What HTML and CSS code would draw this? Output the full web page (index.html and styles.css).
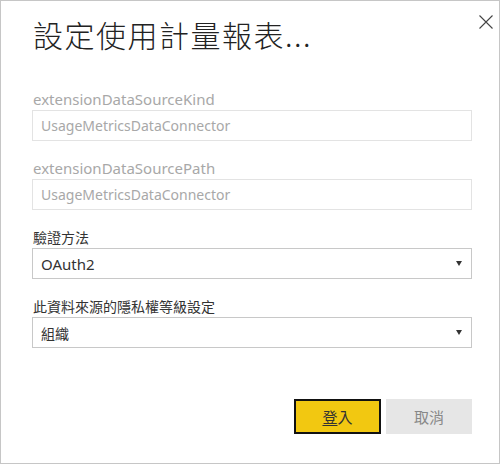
FILE: index.html
```html
<!DOCTYPE html>
<html lang="zh-Hant">
<head>
<meta charset="utf-8">
<link rel="stylesheet" href="styles.css">
</head>
<body>
<div class="dialog">
  <button class="close" aria-label="關閉">
    <svg width="14" height="14" viewBox="0 0 14 14"><path d="M0.5 0.5 L13.5 13.5 M13.5 0.5 L0.5 13.5" stroke="#444" stroke-width="1.1" fill="none"/></svg>
  </button>
  <h1 class="title">設定使用計量報表...</h1>
  <div class="fields">
    <div class="field">
      <div class="label disabled">extensionDataSourceKind</div>
      <div class="input disabled">UsageMetricsDataConnector</div>
    </div>
    <div class="field">
      <div class="label disabled">extensionDataSourcePath</div>
      <div class="input disabled">UsageMetricsDataConnector</div>
    </div>
    <div class="field">
      <div class="label cjk">驗證方法</div>
      <div class="input select"><span>OAuth2</span><span class="arrow"></span></div>
    </div>
    <div class="field">
      <div class="label cjk">此資料來源的隱私權等級設定</div>
      <div class="input select"><span class="cjk-val">組織</span><span class="arrow"></span></div>
    </div>
  </div>
  <div class="actions">
    <button class="btn primary"><span class="u">登</span>入</button>
    <button class="btn secondary">取消</button>
  </div>
</div>
</body>
</html>
```
FILE: styles.css
```css
* { box-sizing: border-box; }
html, body { margin: 0; padding: 0; background: #fff; }
body {
  font-family: "Noto Sans", "Noto Sans CJK TC", sans-serif;
  color: #333;
}
.dialog {
  position: relative;
  width: 500px;
  height: 464px;
  border: 1px solid #c6c6c6;
  padding: 0 27px 0 31px;
  display: flex;
  flex-direction: column;
}
.close {
  position: absolute;
  top: 14px;
  right: 6px;
  width: 14px;
  height: 14px;
  padding: 0;
  border: 0;
  background: none;
  line-height: 0;
}
.title {
  margin: 13px 0 0 1px;
  font-family: "Noto Sans CJK TC", sans-serif;
  font-weight: 300;
  font-size: 30px;
  line-height: 40px;
  letter-spacing: 1.5px;
  color: #222;
}
.fields {
  margin-top: 35px;
  display: flex;
  flex-direction: column;
  gap: 17px;
}
.field {
  display: flex;
  flex-direction: column;
}
.label {
  font-family: "Noto Sans", "Noto Sans CJK TC", sans-serif;
  font-size: 15px;
  line-height: 21px;
  color: #333;
  margin-left: 1px;
}
.label.cjk { font-size: 14px; }
.label.disabled { color: #a8a8a8; }
.input {
  height: 31px;
  border: 1px solid #c8c8c8;
  padding: 0 8px;
  display: flex;
  align-items: center;
  font-size: 14px;
  color: #333;
}
.cjk-val { font-size: 14px; }
.input.disabled {
  border-color: #e3e3e3;
  color: #a8a8a8;
}
.select { justify-content: space-between; font-size: 15px; }
.arrow {
  width: 0;
  height: 0;
  border-left: 3.5px solid transparent;
  border-right: 3.5px solid transparent;
  border-top: 5px solid #333;
  margin-right: 1px;
}
.actions {
  margin-top: auto;
  margin-bottom: 29px;
  display: flex;
  justify-content: flex-end;
  gap: 5px;
}
.btn {
  height: 35px;
  font-family: "Noto Sans CJK TC", sans-serif;
  font-size: 15px;
  padding: 0;
}
.primary {
  width: 87px;
  background: #f2c811;
  border: 2px solid #111;
  color: #333;
}
.primary .u { text-decoration: underline; text-underline-offset: 2px; }
.secondary {
  width: 86px;
  background: #e6e6e6;
  border: 1px solid #e6e6e6;
  color: #888;
}
```
